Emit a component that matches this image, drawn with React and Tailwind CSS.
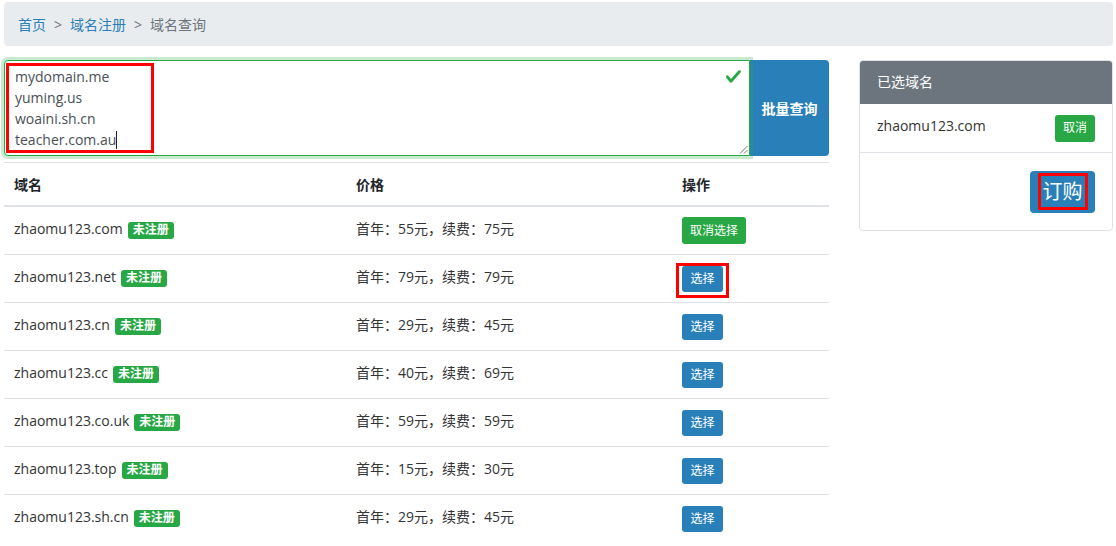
import React from "react";

const rows = [
  { d: "zhaomu123.com", p: "首年：55元，续费：75元", sel: true },
  { d: "zhaomu123.net", p: "首年：79元，续费：79元", mark: true },
  { d: "zhaomu123.cn", p: "首年：29元，续费：45元" },
  { d: "zhaomu123.cc", p: "首年：40元，续费：69元" },
  { d: "zhaomu123.co.uk", p: "首年：59元，续费：59元" },
  { d: "zhaomu123.top", p: "首年：15元，续费：30元" },
  { d: "zhaomu123.sh.cn", p: "首年：29元，续费：45元" },
];

function Badge() {
  return (
    <span className="inline-block ml-[5px] px-[5px] py-[2.5px] leading-none text-[12px] font-bold text-white bg-[#28a745] rounded-[3px]">
      未注册
    </span>
  );
}

export default function App() {
  return (
    <div className="w-[1116px] h-[546px] overflow-hidden bg-white pl-[4px] pr-[3px] pt-[2px] text-[14px] text-[#212529] font-['Open_Sans','Noto_Sans_CJK_SC',sans-serif]">
      {/* breadcrumb */}
      <div className="h-[44px] rounded-[4px] bg-[#e9ecef] flex items-center px-[14px]">
        <span className="text-[#2a7fb5]">首页</span>
        <span className="px-[8px] text-[#6c757d]">&gt;</span>
        <span className="text-[#2a7fb5]">域名注册</span>
        <span className="px-[8px] text-[#6c757d]">&gt;</span>
        <span className="text-[#6c757d]">域名查询</span>
      </div>

      <div className="mt-[14px] flex gap-[30px]">
        {/* left */}
        <div className="w-[825px]">
          <div className="flex h-[96px]">
            <div className="relative w-[746px] border border-[#28a745] rounded-l-[4px] bg-white shadow-[0_0_0_3px_rgba(40,167,69,0.25)]">
              <div className="ml-[1px] mt-[2px] w-[148px] border-[3px] border-[#ff0000] pl-[6px] leading-[21px] text-[14px] text-[#495057]">
                <div>mydomain.me</div>
                <div>yuming.us</div>
                <div>woaini.sh.cn</div>
                <div>
                  teacher.com.au
                  <span className="inline-block w-px h-[18px] bg-[#222] align-[-4px]" />
                </div>
              </div>
              <svg
                className="absolute top-[7px] right-[7px]"
                width="17"
                height="17"
                viewBox="0 0 8 8"
              >
                <path
                  fill="#28a745"
                  d="M2.3 6.73L.6 4.53c-.4-1.04.46-1.4 1.1-.8l1.1 1.4 3.4-3.8c.6-.63 1.6-.27 1.2.7l-4 4.6c-.43.5-.8.4-1.1.1z"
                />
              </svg>
              <svg className="absolute bottom-[1px] right-[1px]" width="9" height="9" viewBox="0 0 9 9">
                <path d="M8.5 1 L1 8.5 M8.5 5 L5 8.5" stroke="#777" strokeWidth="1" />
              </svg>
            </div>
            <button className="w-[79px] bg-[#2980b9] text-white text-[14px] font-semibold rounded-r-[4px]">
              批量查询
            </button>
          </div>

          {/* table */}
          <div className="mt-[6px]">
            <div className="flex items-center h-[45px] border-t border-[#dee2e6] border-b-2 font-bold">
              <div className="w-[342px] pl-[10px]">域名</div>
              <div className="w-[326px] pl-[10px]">价格</div>
              <div className="flex-1 pl-[10px]">操作</div>
            </div>
            {rows.map((r, i) => (
              <div
                key={r.d}
                className={
                  i === 0
                    ? "flex items-center h-[47px]"
                    : "flex items-center h-[48px] border-t border-[#dee2e6]"
                }
              >
                <div className="w-[342px] pl-[10px] pb-[4px] text-[#333]">
                  {r.d}
                  <Badge />
                </div>
                <div className="w-[326px] pl-[10px] pb-[4px] text-[#333]">{r.p}</div>
                <div className="flex-1 pl-[10px] flex">
                  {r.sel ? (
                    <button className="h-[27px] px-[8px] text-[12px] text-white bg-[#28a745] rounded-[3px]">
                      取消选择
                    </button>
                  ) : (
                    <div className="relative">
                      <button className="h-[26px] w-[41px] text-[12px] text-white bg-[#2980b9] rounded-[3px]">
                        选择
                      </button>
                      {r.mark && (
                        <div className="absolute -left-[6px] -right-[6px] -top-[3px] -bottom-[6px] border-[3px] border-[#ff0000]" />
                      )}
                    </div>
                  )}
                </div>
              </div>
            ))}
          </div>
        </div>

        {/* right */}
        <div className="w-[254px]">
          <div className="border border-[#dee2e6] rounded-[4px] overflow-hidden">
            <div className="h-[43px] bg-[#6c757d] text-white flex items-center pl-[17px] pb-[2px]">已选域名</div>
            <div className="h-[49px] border-b border-[#dee2e6] flex items-center justify-between pl-[17px] pr-[17px]">
              <span className="pb-[5px] text-[#333]">zhaomu123.com</span>
              <button className="h-[27px] px-[8px] text-[12px] text-white bg-[#28a745] rounded-[3px]">
                取消
              </button>
            </div>
            <div className="h-[77px] flex items-center justify-end px-[17px]">
              <button className="relative h-[42px] w-[65px] text-[20px] leading-[30px] text-white bg-[#2980b9] rounded-[4px]">
                订购
                <span className="absolute left-[8px] right-[7px] top-[2px] bottom-[3px] border-[3px] border-[#ff0000]" />
              </button>
            </div>
          </div>
        </div>
      </div>
    </div>
  );
}
